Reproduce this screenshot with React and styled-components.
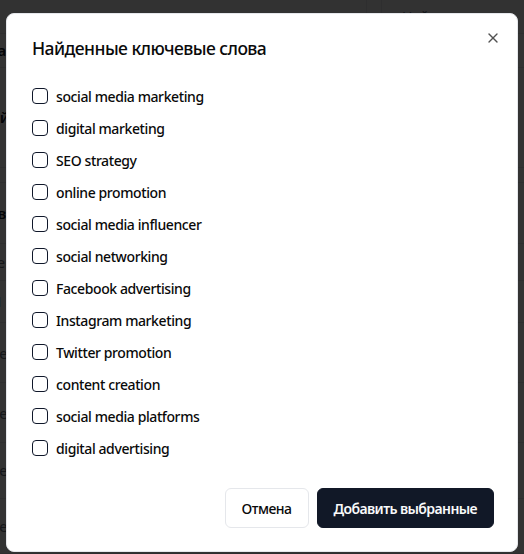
import React from 'react';
import styled, { createGlobalStyle } from 'styled-components';

const GlobalStyle = createGlobalStyle`
  html, body {
    margin: 0;
    padding: 0;
    height: 100%;
    overflow: hidden;
    background: #ffffff;
    font-family: "Noto Sans", "Open Sans", sans-serif;
  }
  * { box-sizing: border-box; }
`;

const keywords = [
  'social media marketing',
  'digital marketing',
  'SEO strategy',
  'online promotion',
  'social media influencer',
  'social networking',
  'Facebook advertising',
  'Instagram marketing',
  'Twitter promotion',
  'content creation',
  'social media platforms',
  'digital advertising',
];

const backRows = [
  { h: 36, text: 'за', bold: true },
  { h: 107, text: 'ий', bold: true },
  { h: 16, text: '' },
  { h: 65, text: 'зв', bold: true },
  { h: 39, text: 'те', bold: false },
  { h: 45, text: 'Н', bold: true },
  { h: 64, text: 'ие', bold: false },
  { h: 64, text: 'ие', bold: false },
  { h: 59, text: 'ие', bold: false },
  { h: 59, text: 'ие', bold: false },
];

const Page = styled.div`
  width: 524px;
  height: 554px;
  background: #ffffff;
  display: flex;
  flex-direction: column;
`;

const PageHeader = styled.div`
  height: 36px;
  display: flex;
  align-items: center;
  border-bottom: 1px solid #e5e7eb;
  background: #f8f8f8;
`;

const HeaderDivider = styled.div`
  margin-left: 366px;
  width: 16px;
  height: 100%;
  border-left: 1px solid #e5e7eb;
  border-right: 1px solid #e5e7eb;
`;

const SearchHint = styled.div`
  margin-left: 20px;
  font-size: 14px;
  color: #6b7280;
`;

const BackRow = styled.div`
  height: ${p => p.$h}px;
  border-bottom: 1px solid #e5e7eb;
  display: flex;
  align-items: center;
  font-size: 15px;
  font-weight: ${p => (p.$bold ? 600 : 400)};
  color: ${p => (p.$bold ? '#111827' : '#6b7280')};
  text-indent: -10px;
  overflow: hidden;
`;

const Overlay = styled.div`
  position: fixed;
  inset: 0;
  background: rgba(0, 0, 0, 0.8);
`;

const Dialog = styled.div`
  position: fixed;
  left: 6px;
  top: 13px;
  width: 512px;
  background: #ffffff;
  border: 1px solid #e5e7eb;
  border-radius: 8px;
  padding: 20px 23px 23px 25px;
  display: flex;
  flex-direction: column;
  color: #0a0a0a;
`;

const Title = styled.h2`
  margin: 0;
  font-size: 17.5px;
  line-height: 28px;
  font-weight: 500;
  letter-spacing: -0.55px;
  color: #0a0a0a;
`;

const CloseButton = styled.button`
  position: absolute;
  right: 16px;
  top: 16px;
  width: 16px;
  height: 16px;
  padding: 0;
  border: none;
  background: none;
  color: #0a0a0a;
  opacity: 0.7;
  display: flex;
  align-items: center;
  justify-content: center;
  cursor: pointer;
`;

const List = styled.div`
  margin-top: 26px;
  display: flex;
  flex-direction: column;
  gap: 16px;
`;

const Item = styled.label`
  display: flex;
  align-items: center;
  gap: 8px;
  height: 16px;
  font-size: 14px;
  font-weight: 500;
  letter-spacing: -0.4px;
  color: #0a0a0a;
  cursor: pointer;
`;

const Box = styled.span`
  width: 16px;
  height: 16px;
  border: 1px solid #0f172a;
  border-radius: 4px;
  flex-shrink: 0;
`;

const Footer = styled.div`
  margin-top: 32px;
  display: flex;
  justify-content: flex-end;
  gap: 8px;
`;

const Button = styled.button`
  height: 40px;
  padding: 0 16px;
  border-radius: 6px;
  font-family: inherit;
  font-size: 14px;
  font-weight: ${p => (p.$primary ? 600 : 500)};
  letter-spacing: ${p => (p.$primary ? '-0.6px' : '-0.5px')};
  cursor: pointer;
  border: 1px solid ${p => (p.$primary ? '#111827' : '#e5e7eb')};
  background: ${p => (p.$primary ? '#111827' : '#ffffff')};
  color: ${p => (p.$primary ? '#f9fafb' : '#0a0a0a')};
`;

const CloseIcon = () => (
  <svg width="16" height="16" viewBox="0 0 24 24" fill="none" stroke="currentColor" strokeWidth="2" strokeLinecap="round" strokeLinejoin="round">
    <path d="M18 6 6 18" />
    <path d="m6 6 12 12" />
  </svg>
);

export default function App() {
  return (
    <>
      <GlobalStyle />
      <Page>
        <PageHeader>
          <HeaderDivider />
          <SearchHint>Найти...</SearchHint>
        </PageHeader>
        {backRows.map((r, i) => (
          <BackRow key={i} $h={r.h} $bold={r.bold}>{r.text}</BackRow>
        ))}
      </Page>
      <Overlay />
      <Dialog role="dialog">
        <Title>Найденные ключевые слова</Title>
        <CloseButton aria-label="Закрыть"><CloseIcon /></CloseButton>
        <List>
          {keywords.map(k => (
            <Item key={k}>
              <Box />
              {k}
            </Item>
          ))}
        </List>
        <Footer>
          <Button>Отмена</Button>
          <Button $primary>Добавить выбранные</Button>
        </Footer>
      </Dialog>
    </>
  );
}
